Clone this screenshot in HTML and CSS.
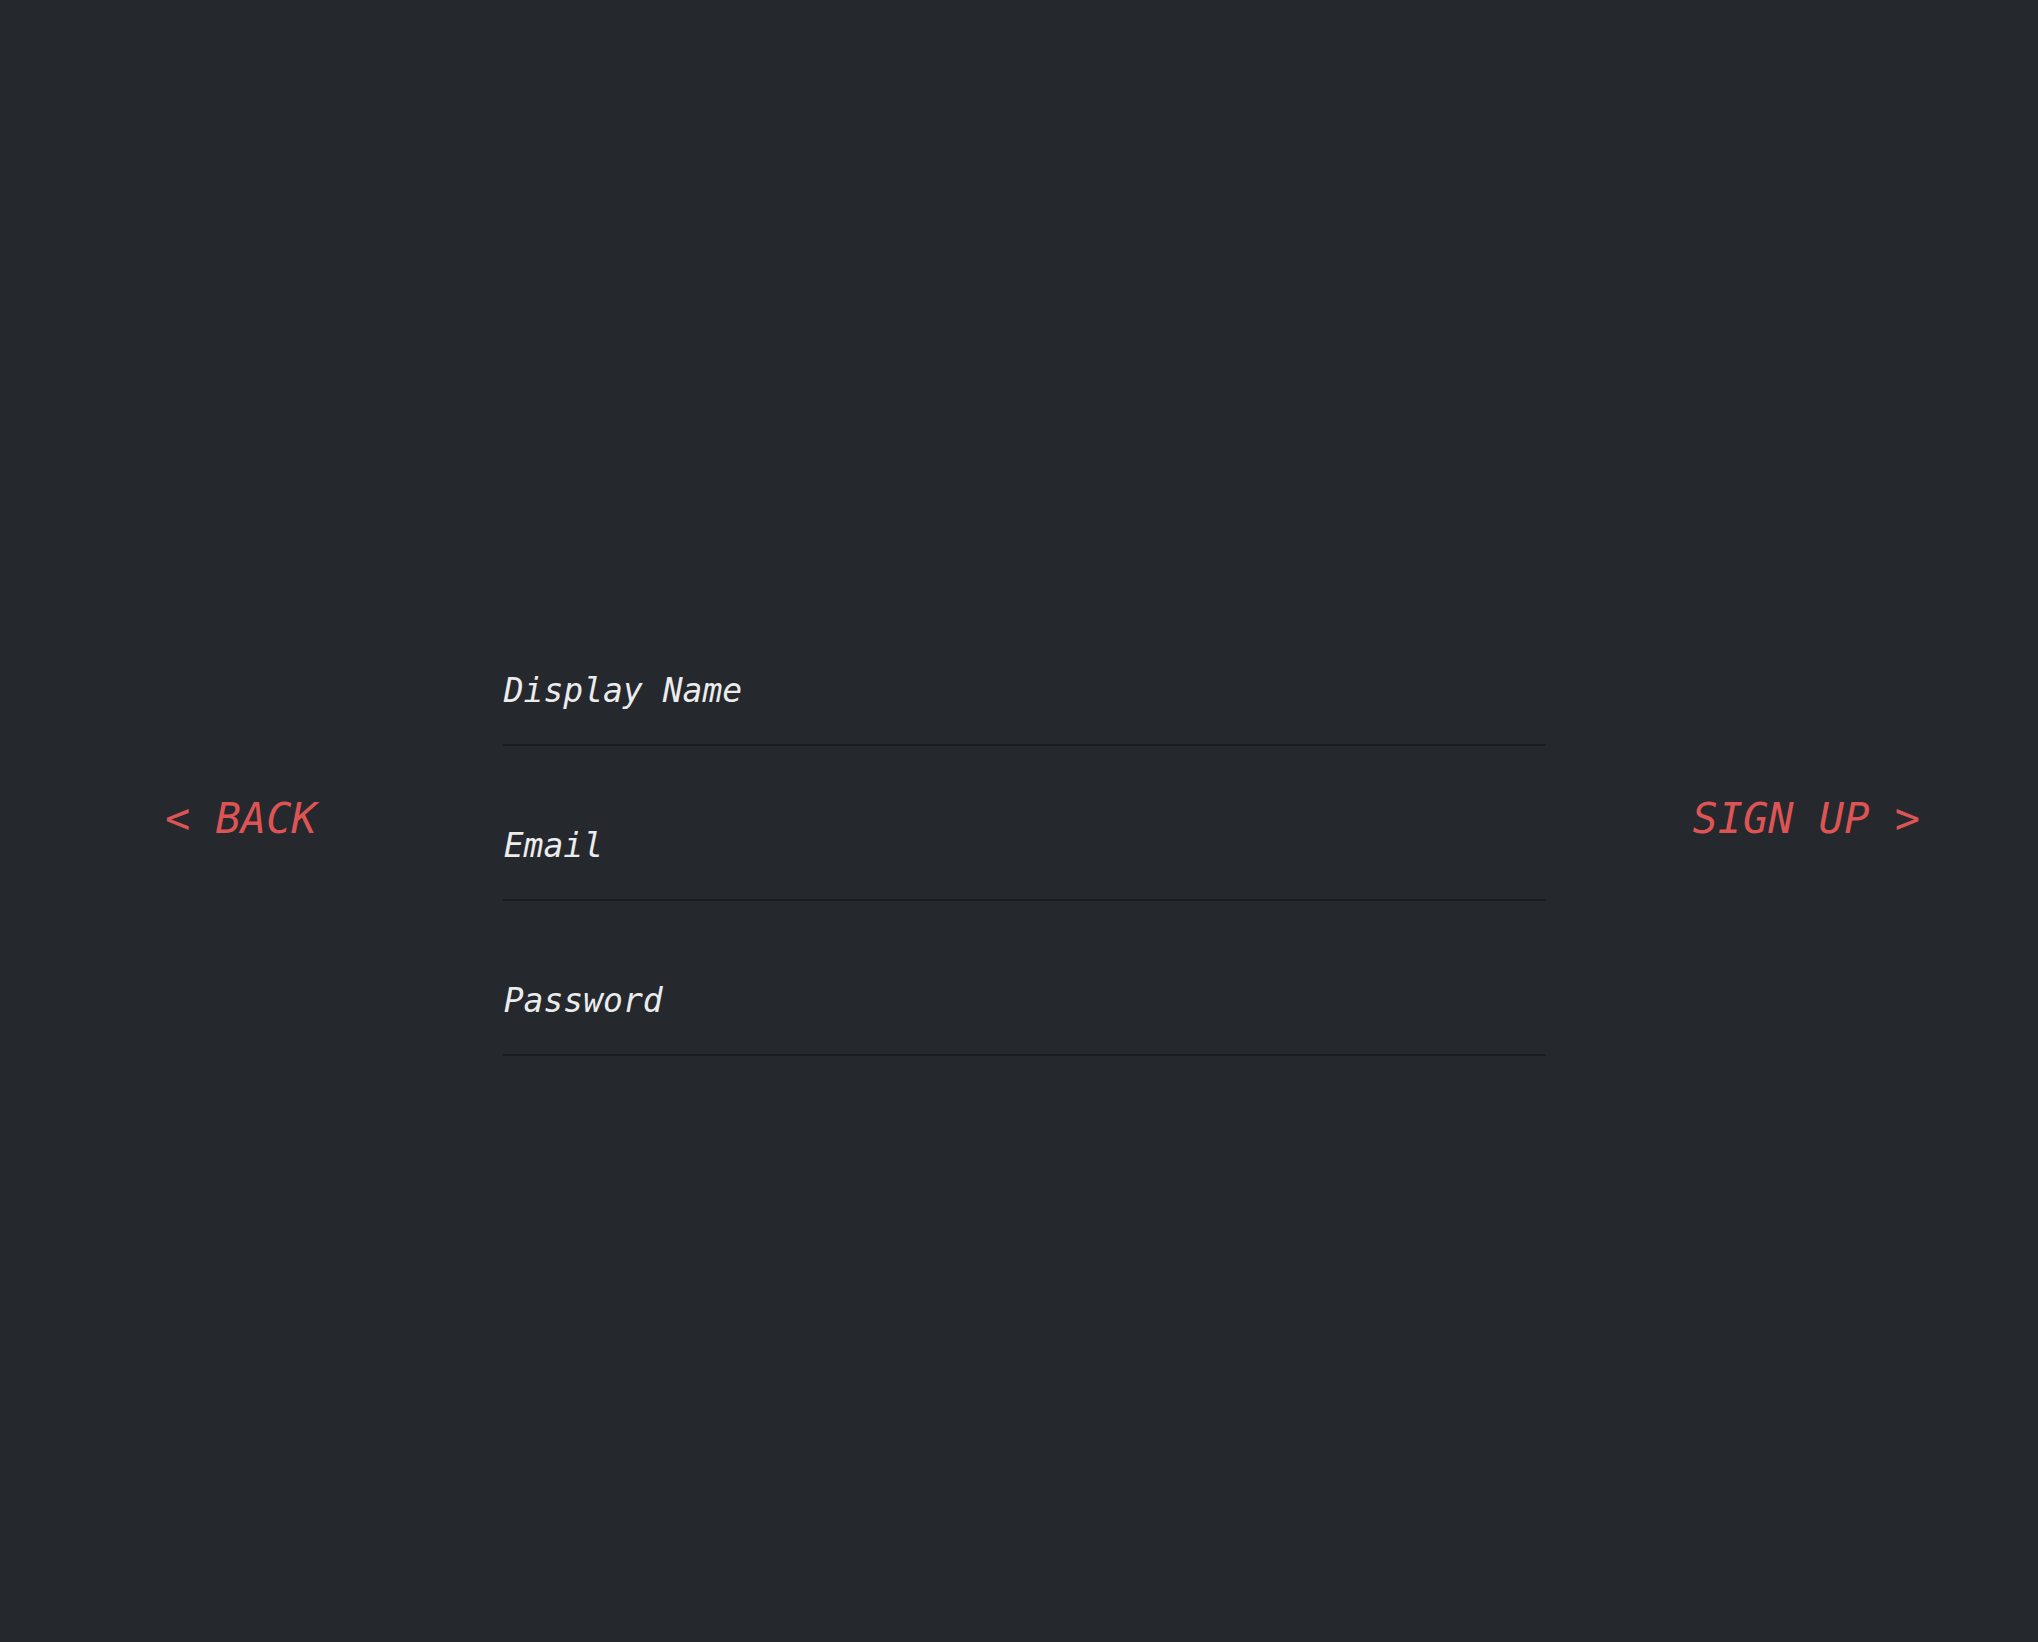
FILE: index.html
```html
<!DOCTYPE html>
<html lang="en">
<head>
<meta charset="utf-8">
<title>Sign up</title>
<link rel="stylesheet" href="styles.css">
</head>
<body>
<main class="page">
  <a class="nav-btn back" href="#">&lt; BACK</a>
  <form class="form">
    <div class="field"><span class="label">Display Name</span></div>
    <div class="field"><span class="label">Email</span></div>
    <div class="field"><span class="label">Password</span></div>
  </form>
  <a class="nav-btn next" href="#">SIGN UP &gt;</a>
</main>
</body>
</html>
```

FILE: styles.css
```css
html, body {
  margin: 0;
  padding: 0;
  background: #25282d;
  height: 100%;
}
body {
  font-family: "DejaVu Sans Mono", "Liberation Mono", monospace;
}
.page {
  box-sizing: border-box;
  height: 1642px;
  display: flex;
  align-items: flex-start;
  padding: 671px 118px 0 165px;
}
.nav-btn {
  font-size: 42px;
  line-height: 49px;
  font-style: italic;
  color: #dc5454;
  text-decoration: none;
  white-space: pre;
  margin-top: 123px;
}
.form {
  margin: 0 0 0 186px;
  width: 1043px;
  display: flex;
  flex-direction: column;
  gap: 80px;
}
.field {
  padding-bottom: 33px;
  border-bottom: 2px solid #1a1c20;
}
.label {
  display: block;
  font-size: 33px;
  line-height: 40px;
  font-style: italic;
  color: #ececec;
  padding-left: 1px;
}
.next {
  margin-left: auto;
}
```
